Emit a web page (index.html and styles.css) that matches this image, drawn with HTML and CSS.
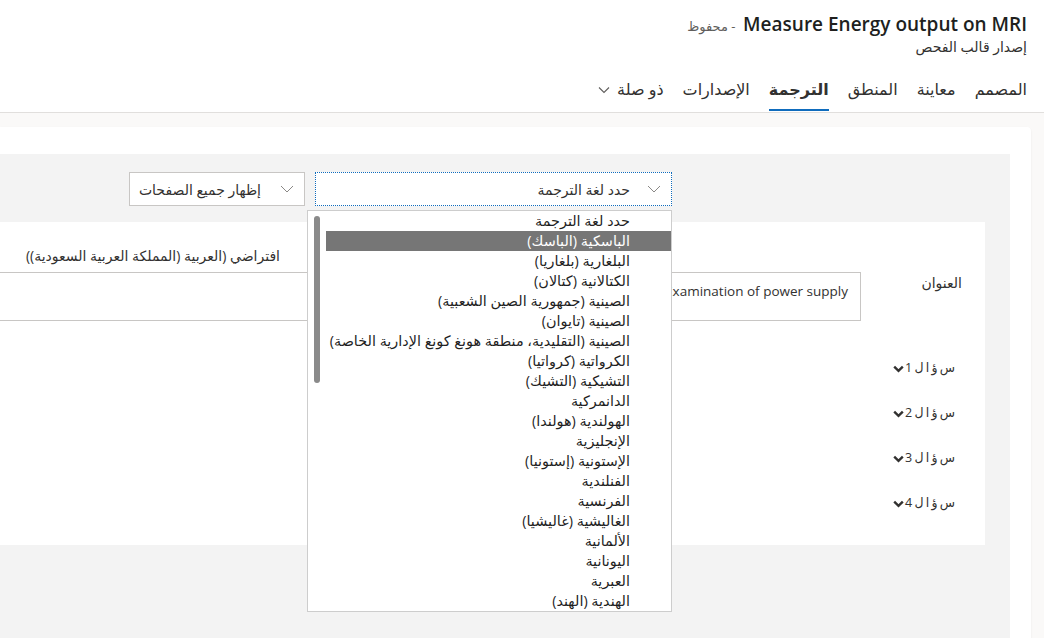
FILE: index.html
```html
<!DOCTYPE html>
<html lang="ar" dir="rtl">
<head>
  <meta charset="UTF-8" />
  <title>Measure Energy output on MRI</title>
  <link rel="stylesheet" href="styles.css">
</head>
<body>
  <div class="header">
    <div class="titleRow">
      <span class="docTitle">Measure Energy output on MRI</span>
      <span class="saved">- محفوظ</span>
    </div>
    <div class="subtitle">إصدار قالب الفحص</div>
    <div class="tabs">
      <span class="tab">المصمم</span>
      <span class="tab">معاينة</span>
      <span class="tab">المنطق</span>
      <span class="tab active">الترجمة</span>
      <span class="tab">الإصدارات</span>
      <span class="tab">ذو صلة
        <svg class="tabChevron" width="12" height="8" viewBox="0 0 12 8"><path d="M1 1.5 L6 6.5 L11 1.5" fill="none" stroke="#605e5c" stroke-width="1.1"/></svg>
      </span>
    </div>
  </div>

  <div class="main">
    <div class="card">
      <div class="panel">
        <div class="toolbar">
          <div class="selectWrap">
            <div class="selectBox focused">
              <span class="selectText">حدد لغة الترجمة</span>
              <svg class="selectChevron" width="14" height="8" viewBox="0 0 14 8"><path d="M1 1 L7 7 L13 1" fill="none" stroke="#8a8886" stroke-width="1"/></svg>
            </div>

            <!-- open language list -->
            <div class="langList">
              <div class="thumb"></div>
              <div class="langItem">حدد لغة الترجمة</div>
              <div class="langItem selected">الباسكية (الباسك)</div>
              <div class="langItem">البلغارية (بلغاريا)</div>
              <div class="langItem">الكتالانية (كتالان)</div>
              <div class="langItem">الصينية (جمهورية الصين الشعبية)</div>
              <div class="langItem">الصينية (تايوان)</div>
              <div class="langItem">الصينية (التقليدية، منطقة هونغ كونغ الإدارية الخاصة)</div>
              <div class="langItem">الكرواتية (كرواتيا)</div>
              <div class="langItem">التشيكية (التشيك)</div>
              <div class="langItem">الدانمركية</div>
              <div class="langItem">الهولندية (هولندا)</div>
              <div class="langItem">الإنجليزية</div>
              <div class="langItem">الإستونية (إستونيا)</div>
              <div class="langItem">الفنلندية</div>
              <div class="langItem">الفرنسية</div>
              <div class="langItem">الغاليشية (غاليشيا)</div>
              <div class="langItem">الألمانية</div>
              <div class="langItem">اليونانية</div>
              <div class="langItem">العبرية</div>
              <div class="langItem">الهندية (الهند)</div>
            </div>
          </div>

          <div class="selectBox pages">
            <span class="selectText">إظهار جميع الصفحات</span>
            <svg class="selectChevron" width="14" height="8" viewBox="0 0 14 8"><path d="M1 1 L7 7 L13 1" fill="none" stroke="#8a8886" stroke-width="1"/></svg>
          </div>
        </div>

        <div class="sheet">
          <div class="grid">
            <div class="colHead">افتراضي (العربية (المملكة العربية السعودية))</div>
            <div class="fieldLabel">العنوان</div>
            <div class="box source">Examination of power supply</div>
            <div class="box target"></div>
          </div>

          <div class="questions">
            <div class="question">س ؤ ا ل 1 <svg class="qChevron" width="11" height="8" viewBox="0 0 11 8"><path d="M1.2 1.6 L5.5 5.8 L9.8 1.6" fill="none" stroke="#323130" stroke-width="2.4"/></svg></div>
            <div class="question">س ؤ ا ل 2 <svg class="qChevron" width="11" height="8" viewBox="0 0 11 8"><path d="M1.2 1.6 L5.5 5.8 L9.8 1.6" fill="none" stroke="#323130" stroke-width="2.4"/></svg></div>
            <div class="question">س ؤ ا ل 3 <svg class="qChevron" width="11" height="8" viewBox="0 0 11 8"><path d="M1.2 1.6 L5.5 5.8 L9.8 1.6" fill="none" stroke="#323130" stroke-width="2.4"/></svg></div>
            <div class="question">س ؤ ا ل 4 <svg class="qChevron" width="11" height="8" viewBox="0 0 11 8"><path d="M1.2 1.6 L5.5 5.8 L9.8 1.6" fill="none" stroke="#323130" stroke-width="2.4"/></svg></div>
          </div>
        </div>
      </div>
    </div>
  </div>
</body>
</html>
```

FILE: styles.css
```css
html, body { margin: 0; height: 100%; }
body {
  font-family: "Segoe UI", "Open Sans", "DejaVu Sans", sans-serif;
  font-size: 14px;
  color: #323130;
  background: #faf9f8;
  overflow: hidden;
}

/* top header with title and tabs */
.header {
  background: #fff;
  border-bottom: 1px solid #e1dfdd;
  padding: 11px 17px 0 0;
}
.titleRow { height: 26px; line-height: 26px; white-space: nowrap; }
.docTitle { font-size: 19px; font-weight: 600; color: #201f1e; }
.saved { font-size: 13px; color: #605e5c; margin-right: 4px; }
.subtitle { line-height: 20px; font-size: 14px; }
.tabs { display: flex; gap: 19px; margin-top: 15px; padding-bottom: 1px; }
.tab {
  font-size: 16px;
  line-height: 20px;
  padding: 7px 0 10px;
  border-bottom: 2px solid transparent;
  display: flex;
  align-items: center;
  gap: 7px;
}
.tab.active { font-weight: 600; border-bottom-color: #0f6cbd; }
.tabChevron { margin-top: 2px; }

/* body card */
.main { padding-top: 14px; }
.card {
  margin-right: 13px;
  background: #fff;
  border-top-right-radius: 4px;
  box-shadow: 0 1px 2px rgba(0,0,0,0.08);
  padding: 27px 21px 0 0;
}
.panel { background: #f3f3f3; height: 484px; box-sizing: border-box; padding-top: 18px; }

.toolbar { display: flex; gap: 10px; padding-right: 338px; }
.selectWrap { position: relative; }
.selectBox {
  height: 34px;
  box-sizing: border-box;
  background: #fff;
  border: 1px solid #c8c6c4;
  display: flex;
  align-items: center;
  justify-content: flex-end;
  flex-direction: row-reverse;
}
.selectBox.focused { width: 357px; border: 1px dotted #0f6cbd; }
.selectBox.pages { width: 176px; }
.selectChevron { margin: 0 10px 0 19px; }
.focused .selectChevron { margin: 0 10px 0 17px; }

/* the dropdown list */
.langList {
  position: absolute;
  top: 38px;
  right: 0;
  width: 365px;
  box-sizing: border-box;
  background: #fff;
  border: 1px solid #cdcdcd;
  z-index: 5;
}
.langItem {
  height: 20px;
  line-height: 20px;
  margin-left: 18px;
  padding-right: 41px;
  white-space: nowrap;
  font-size: 14.4px;
  color: #1f1f1f;
}
.langItem.selected { background: #767676; color: #fff; }
.thumb {
  position: absolute;
  left: 6px;
  top: 5px;
  width: 6px;
  height: 167px;
  border-radius: 3px;
  background: #8a8a8a;
}

/* translation sheet */
.sheet {
  margin: 16px 25px 0 0;
  height: 323px;
  background: #fff;
  padding-top: 23px;
  box-sizing: border-box;
}
.grid {
  display: grid;
  grid-template-columns: 124px 361px 190px 1fr;
  grid-template-rows: 22px 49px;
  row-gap: 5px;
}
.colHead {
  grid-column: 4;
  grid-row: 1;
  line-height: 22px;
  padding-right: 30px;
  font-size: 14px;
  white-space: nowrap;
}
.fieldLabel { grid-column: 1; grid-row: 2; padding: 1px 23px 0 0; line-height: 20px; }
.box { border: 1px solid #c8c6c4; box-sizing: border-box; grid-row: 2; }
.box.source {
  grid-column: 2;
  direction: ltr;
  text-align: right;
  padding: 8px 12px 0 0;
  line-height: 20px;
  font-size: 13.5px;
}
.box.target { grid-column: 4; margin-left: -20px; }

.questions { margin-top: 24px; padding-right: 30px; }
.question {
  height: 45px;
  line-height: 45px;
  font-size: 12.5px;
  word-spacing: -1px;
  display: flex;
  align-items: center;
  gap: 1px;
}
.qChevron { margin-top: 2px; }
```
